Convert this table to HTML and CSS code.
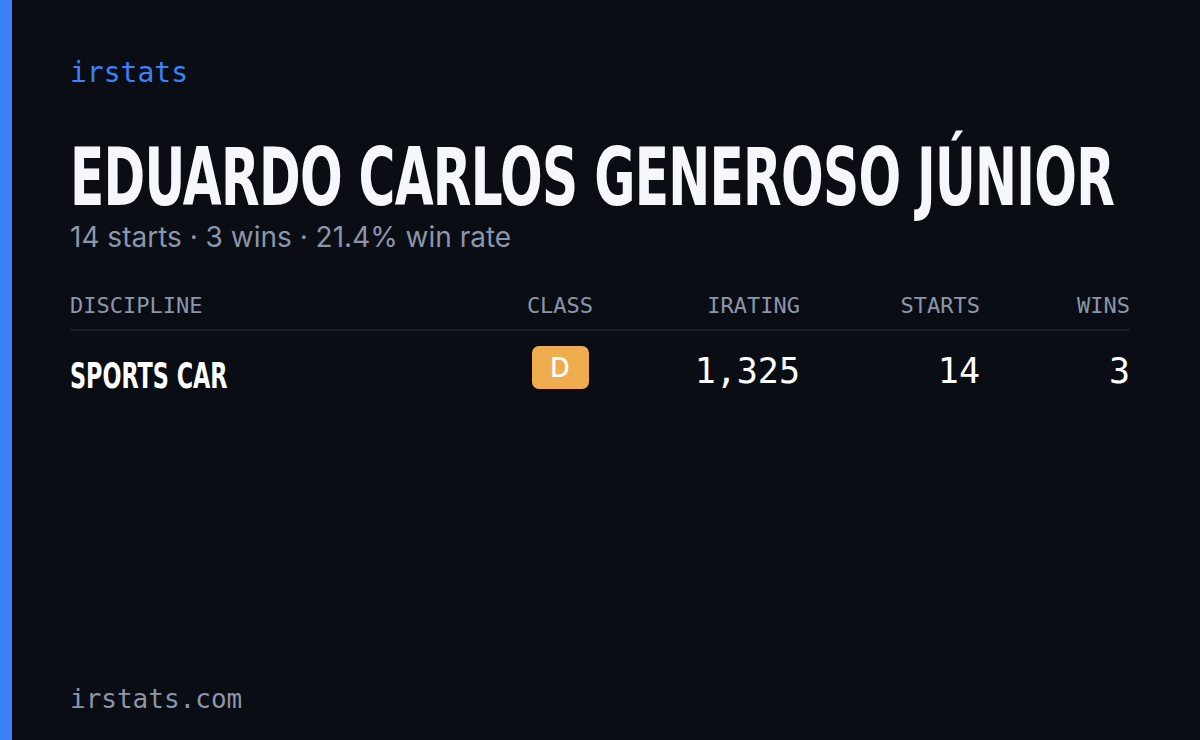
FILE: index.html
```html
<!DOCTYPE html>
<html lang="pt">
<head>
<meta charset="utf-8">
<title>irstats</title>
<link rel="stylesheet" href="styles.css">
</head>
<body>
<div class="card">
  <div class="accent"></div>
  <main class="content">
    <div class="brand">irstats</div>
    <h1 class="name"><span class="name-inner">EDUARDO CARLOS GENEROSO JÚNIOR</span></h1>
    <p class="summary">14 starts · 3 wins · 21.4% win rate</p>
    <div class="table">
      <div class="row head">
        <div class="c-disc">DISCIPLINE</div>
        <div class="c-class">CLASS</div>
        <div class="c-num c-ir">IRATING</div>
        <div class="c-num c-st">STARTS</div>
        <div class="c-num c-w">WINS</div>
      </div>
      <div class="row body">
        <div class="c-disc disc"><span class="disc-inner">SPORTS CAR</span></div>
        <div class="c-class cls"><span class="badge">D</span></div>
        <div class="c-num c-ir num">1,325</div>
        <div class="c-num c-st num">14</div>
        <div class="c-num c-w num">3</div>
      </div>
    </div>
    <div class="spacer"></div>
    <div class="footer">irstats.com</div>
  </main>
</div>
</body>
</html>
```

FILE: styles.css
```css
html, body {
  margin: 0;
  padding: 0;
  background: #0a0d14;
}
.card {
  width: 1200px;
  height: 740px;
  display: flex;
  background: #0a0d14;
  overflow: hidden;
}
.accent {
  width: 12px;
  flex: none;
  background: #3b82f6;
}
.content {
  flex: 1;
  min-width: 0;
  display: flex;
  flex-direction: column;
  padding: 56px 70px 26px 58px;
}
.brand {
  font-family: "DejaVu Sans Mono", monospace;
  font-size: 28px;
  line-height: 34px;
  color: #3b82f6;
}
.name {
  margin: 48px 0 0;
  font-family: "DejaVu Sans Condensed", "DejaVu Sans", sans-serif;
  font-weight: bold;
  font-size: 80px;
  line-height: 80px;
  color: #f5f7fa;
  white-space: nowrap;
}
.name-inner {
  display: inline-block;
  transform: scaleX(0.697);
  transform-origin: left center;
  letter-spacing: -1px;
}
.summary {
  margin: 2px 0 0;
  font-family: Inter, sans-serif;
  font-size: 28px;
  line-height: 34px;
  color: #8a96aa;
}
.table {
  margin-top: 39px;
}
.row {
  display: flex;
}
.row.head {
  align-items: center;
  font-family: "DejaVu Sans Mono", monospace;
  font-size: 22px;
  line-height: 26px;
  color: #8a96aa;
  padding-bottom: 10px;
  border-bottom: 2px solid #191d29;
}
.row.body {
  align-items: flex-start;
}
.c-disc {
  flex: 1;
  min-width: 0;
}
.c-class {
  width: 120px;
  text-align: center;
}
.c-num {
  text-align: right;
}
.c-ir { width: 180px; }
.c-st { width: 180px; }
.c-w { width: 150px; }
.disc {
  margin-top: 24px;
  font-family: "DejaVu Sans Condensed", "DejaVu Sans", sans-serif;
  font-weight: bold;
  font-size: 36px;
  line-height: 42px;
  color: #ffffff;
  white-space: nowrap;
}
.disc-inner {
  display: inline-block;
  transform: scaleX(0.69);
  transform-origin: left center;
}
.cls {
  margin-top: 15px;
}
.badge {
  display: inline-block;
  width: 57px;
  height: 43px;
  line-height: 43px;
  border-radius: 7px;
  background: #efad4f;
  color: #ffffff;
  font-family: Inter, sans-serif;
  font-weight: 500;
  font-size: 27px;
}
.num {
  margin-top: 19px;
  font-family: "DejaVu Sans Mono", monospace;
  font-size: 35px;
  line-height: 42px;
  color: #ffffff;
}
.spacer {
  flex: 1;
}
.footer {
  font-family: "DejaVu Sans Mono", monospace;
  font-size: 26px;
  color: #8a96aa;
}
```
